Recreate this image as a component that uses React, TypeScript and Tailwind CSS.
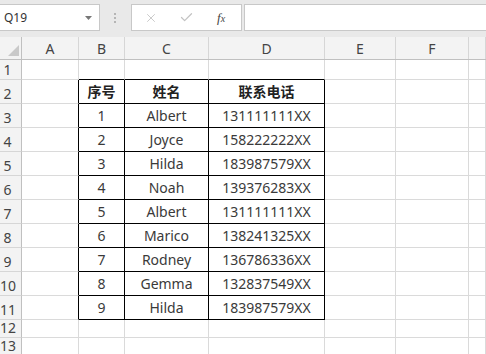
import { X, Check } from "lucide-react";

const cols = [
  { key: "A", w: "w-[57px]" },
  { key: "B", w: "w-[46px]" },
  { key: "C", w: "w-[84px]" },
  { key: "D", w: "w-[116px]" },
  { key: "E", w: "w-[71px]" },
  { key: "F", w: "w-[73px]" },
  { key: "G", w: "flex-1" },
];

const people = [
  { no: "1", name: "Albert", phone: "131111111XX" },
  { no: "2", name: "Joyce", phone: "158222222XX" },
  { no: "3", name: "Hilda", phone: "183987579XX" },
  { no: "4", name: "Noah", phone: "139376283XX" },
  { no: "5", name: "Albert", phone: "131111111XX" },
  { no: "6", name: "Marico", phone: "138241325XX" },
  { no: "7", name: "Rodney", phone: "136786336XX" },
  { no: "8", name: "Gemma", phone: "132837549XX" },
  { no: "9", name: "Hilda", phone: "183987579XX" },
];

const font = "font-['Noto_Sans','Noto_Sans_CJK_SC',sans-serif]";

function cellValue(row: number, col: string) {
  if (row === 2) {
    if (col === "B") return "序号";
    if (col === "C") return "姓名";
    if (col === "D") return "联系电话";
  }
  const p = people[row - 3];
  if (!p) return "";
  if (col === "B") return p.no;
  if (col === "C") return p.name;
  if (col === "D") return p.phone;
  return "";
}

function borderFor(row: number, col: string) {
  const inTable = row >= 2 && row <= 11;
  const tableCol = col === "B" || col === "C" || col === "D";
  if (inTable && tableCol) return "border-r border-b border-r-black border-b-black";
  if (inTable && col === "A") return "border-r border-b border-r-black border-b-[#dadada]";
  if (row === 1 && tableCol) return "border-r border-b border-r-[#dadada] border-b-black";
  return "border-r border-b border-[#dadada]";
}

function Toolbar() {
  return (
    <div className="h-[37px] bg-[#e9e9e9] flex items-start pt-[4px]">
      <div className="w-[100px] h-[27px] bg-white border border-l-0 border-[#c8c8c8] flex items-center justify-between pl-[4px] pr-[7px]">
        <span className={`${font} text-[12px] text-[#333]`}>Q19</span>
        <svg width="7" height="4" viewBox="0 0 7 4">
          <path d="M0 0 L7 0 L3.5 4 Z" fill="#777" />
        </svg>
      </div>
      <div className="w-[31px] h-[27px] flex flex-col items-center justify-center gap-[2px] pr-[1px]">
        <span className="w-[2px] h-[2px] bg-[#b5b5b5]" />
        <span className="w-[2px] h-[2px] bg-[#b5b5b5]" />
        <span className="w-[2px] h-[2px] bg-[#b5b5b5]" />
      </div>
      <div className="w-[111px] h-[27px] bg-white border border-[#c8c8c8] flex items-center pl-[12px]">
        <X className="w-[14px] h-[14px] text-[#c3c3c3]" strokeWidth={1.5} />
        <Check className="w-[15px] h-[15px] text-[#c3c3c3] ml-[21px]" strokeWidth={2} />
        <span className="ml-[23px] font-['Liberation_Serif',serif] italic text-[13px] text-[#444]">
          f<span className="text-[10px]">x</span>
        </span>
      </div>
      <div className="flex-1 h-[27px] ml-[2px] bg-white border border-r-0 border-[#c8c8c8]" />
    </div>
  );
}

function HeaderRow() {
  return (
    <div className="flex h-[23px] bg-[#f3f3f3] border-b border-[#c0c0c0]">
      <div className="w-[22px] shrink-0 border-r border-[#c0c0c0] relative">
        <svg className="absolute left-[8px] bottom-[3px]" width="11" height="11" viewBox="0 0 11 11">
          <path d="M11 0 L11 11 L0 11 Z" fill="#c9c9c9" />
        </svg>
      </div>
      {cols.map((c) => (
        <div
          key={c.key}
          className={`${c.w} shrink-0 border-r border-[#d6d6d6] flex items-center justify-center ${font} text-[14px] text-[#444]`}
        >
          {c.key !== "G" ? c.key : ""}
        </div>
      ))}
    </div>
  );
}

const rowHeights: Record<number, string> = { 1: "h-[20px]", 12: "h-[18px]", 13: "h-[18px]" };

export default function App() {
  const rows = Array.from({ length: 13 }, (_, i) => i + 1);
  return (
    <div className="w-[486px] h-[354px] overflow-hidden bg-white">
      <Toolbar />
      <HeaderRow />
      {rows.map((r) => (
        <div key={r} className={`flex ${rowHeights[r] ?? "h-[24px]"}`}>
          <div
            className={`w-[22px] shrink-0 bg-[#f3f3f3] border-r border-b border-r-[#c0c0c0] border-b-[#d6d6d6] flex items-end ${font} text-[14px] text-[#444] leading-none pb-[2px]`}
          >
            <span className="w-[15px] text-center">{r}</span>
          </div>
          {cols.map((c) => (
            <div
              key={c.key}
              className={`${c.w} shrink-0 ${borderFor(r, c.key)} flex items-center justify-center ${font} text-[14px] text-[#3a3a3a] ${
                r === 2 ? "font-bold text-[#222]" : ""
              }`}
            >
              {cellValue(r, c.key)}
            </div>
          ))}
        </div>
      ))}
    </div>
  );
}
